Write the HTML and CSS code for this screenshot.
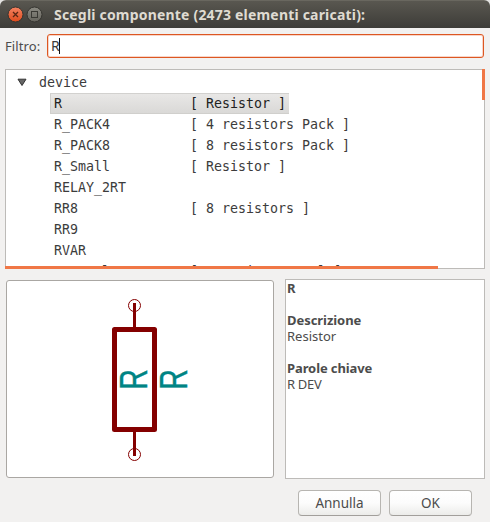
FILE: index.html
```html
<!DOCTYPE html>
<html lang="it">
<head>
<meta charset="utf-8">
<title>Scegli componente</title>
<link rel="stylesheet" href="styles.css">
</head>
<body>
<div class="dialog">
  <header class="titlebar">
    <svg class="controls" width="40" height="28" viewBox="0 0 40 28">
      <defs>
        <linearGradient id="close" x1="0" y1="0" x2="0" y2="1"><stop offset="0" stop-color="#f58362"/><stop offset="1" stop-color="#df4b1c"/></linearGradient>
        <linearGradient id="max" x1="0" y1="0" x2="0" y2="1"><stop offset="0" stop-color="#8b8a82"/><stop offset="1" stop-color="#65635c"/></linearGradient>
      </defs>
      <circle cx="10.5" cy="14.5" r="7.5" fill="url(#close)" stroke="#35342f"/>
      <path d="M8 12l5 5M13 12l-5 5" stroke="#592614" stroke-width="1.3"/>
      <circle cx="29.5" cy="14.5" r="7.5" fill="url(#max)" stroke="#35342f"/>
      <rect x="26.5" y="11.5" width="6" height="6" fill="none" stroke="#3a3934"/>
    </svg>
    <h1 class="title"><svg width="330" height="28"><text x="1" y="20" textLength="311">Scegli componente (2473 elementi caricati):</text></svg></h1>
  </header>
  <div class="filter">
    <label class="filter-label">Filtro:</label>
    <div class="input"><span>R</span><i class="caret"></i></div>
  </div>
  <div class="tree">
    <div class="rows">
      <div class="row parent"><svg class="arrow" width="10" height="8"><path d="M1 1.2h8L5 7.5z" fill="#666" stroke="#333"/></svg>device</div>
      <div class="row item selected"><span class="name">R</span><span>[ Resistor ]</span></div>
      <div class="row item"><span class="name">R_PACK4</span><span>[ 4 resistors Pack ]</span></div>
      <div class="row item"><span class="name">R_PACK8</span><span>[ 8 resistors Pack ]</span></div>
      <div class="row item"><span class="name">R_Small</span><span>[ Resistor ]</span></div>
      <div class="row item"><span class="name">RELAY_2RT</span></div>
      <div class="row item"><span class="name">RR8</span><span>[ 8 resistors ]</span></div>
      <div class="row item"><span class="name">RR9</span></div>
      <div class="row item"><span class="name">RVAR</span></div>
      <div class="row item"><span class="name">Crystal</span><span>[ Two pin crystal ]</span></div>
    </div>
    <i class="vbar"></i>
    <i class="hbar"></i>
  </div>
  <div class="details">
    <div class="preview">
      <svg width="266" height="196" viewBox="7 281 266 196">
        <g fill="none" stroke="#840000">
          <rect x="114.5" y="329.5" width="40" height="100" stroke-width="5" stroke-linejoin="round"/>
          <path d="M134.5 303v25M134.5 431v25" stroke-width="3"/>
          <circle cx="134.5" cy="305.5" r="6"/><circle cx="134.5" cy="454.5" r="6"/>
        </g>
        <g class="symbol-text">
          <text transform="translate(147 389.7) rotate(-90) scale(.73 1)">R</text>
          <text transform="translate(187 389.7) rotate(-90) scale(.73 1)">R</text>
        </g>
      </svg>
    </div>
    <div class="info">
      <b>R</b>
      <b class="heading descr">Descrizione</b>
      <span>Resistor</span>
      <b class="heading keys">Parole chiave</b>
      <span class="kw">R DEV</span>
    </div>
  </div>
  <footer class="buttons">
    <button class="button">Annulla</button>
    <button class="button">OK</button>
  </footer>
</div>
</body>
</html>
```

FILE: styles.css
```css
* { box-sizing: border-box; }
body { margin: 0; background: #e4e4e2; font: 13px/16px "Noto Sans", sans-serif; color: #4c4c4c; }
.dialog { width: 490px; height: 522px; background: #f2f1f0; border-radius: 6px 6px 0 0; overflow: hidden; display: flex; flex-direction: column; }
.titlebar { height: 28px; flex: none; display: flex; padding-left: 5px; background: linear-gradient(#595750, #3d3c38); border-top: 1px solid #69675f; }
.controls { flex: none; margin-top: -1px; }
.title { margin: -1px 0 0 8px; font-size: 13.5px; }
.title svg { display: block; }
.title text { fill: #dfdbd2; font-size: 14px; font-weight: 700; }
.filter { display: flex; align-items: center; height: 24px; margin: 6px 6px 0 5px; flex: none; }
.filter-label { width: 42px; letter-spacing: .1px; }
.input { flex: 1; height: 24px; display: flex; align-items: center; padding-left: 3px; background: #fff; border: 1px solid #dd5722; border-radius: 3px; box-shadow: inset 0 0 0 1px #f8d5c8; font-size: 14px; color: #3c3c3c; }
.caret { width: 1px; height: 16px; margin-left: -1px; background: #111; }
.tree { position: relative; flex: none; height: 200px; margin: 11px 5px 0; background: #fff; border: 1px solid #bdbbb8; }
.rows { height: 198px; overflow: hidden; padding-top: 2px; font: 13.3px/21px "DejaVu Sans Mono", monospace; color: #3c3c3c; }
.row { height: 21px; display: flex; white-space: pre; }
.parent { padding-left: 11px; align-items: center; }
.arrow { margin-right: 12px; margin-top: -2px; }
.item { margin-left: 44px; width: 239px; padding-left: 4px; }
.name { width: 136px; flex: none; }
.selected { background: linear-gradient(#e9e8e7, #d9d8d6); box-shadow: inset 0 1px #d2d1cf, inset 0 -1px #d0cfcc, inset 1px 0 #d0cfcc; color: #222; }
.vbar { position: absolute; right: -1px; top: -1px; width: 3px; height: 31px; background: #f07746; }
.hbar { position: absolute; left: -1px; bottom: -1px; width: 433px; height: 3px; background: #f07746; }
.details { display: flex; gap: 11px; height: 200px; margin: 10px 5px 0 6px; flex: none; }
.preview { width: 268px; height: 198px; margin-top: 1px; background: #fff; border: 1px solid #aaa7a3; border-radius: 3px; }
.preview svg { display: block; }
.symbol-text { font: 39px "Liberation Sans", sans-serif; fill: #008484; stroke: #008484; stroke-width: .4px; }
.info { flex: 1; background: #fff; border: 1px solid #bdbbb8; padding-left: 1px; display: flex; flex-direction: column; }
.heading { margin-top: 16px; }
.descr { letter-spacing: -.05px; }
.keys { letter-spacing: -.1px; }
.kw { letter-spacing: -.3px; }
.buttons { display: flex; justify-content: flex-end; gap: 8px; margin: 11px 18px 0 0; }
.button { width: 83px; height: 26px; padding: 0 0 1px; font: 13.5px "Noto Sans", sans-serif; color: #4c4c4c; background: linear-gradient(#fff, #fcfcfc 50%, #ececea); border: 1px solid #b7b5b1; border-bottom-color: #a29f9b; border-radius: 4px; }
```
